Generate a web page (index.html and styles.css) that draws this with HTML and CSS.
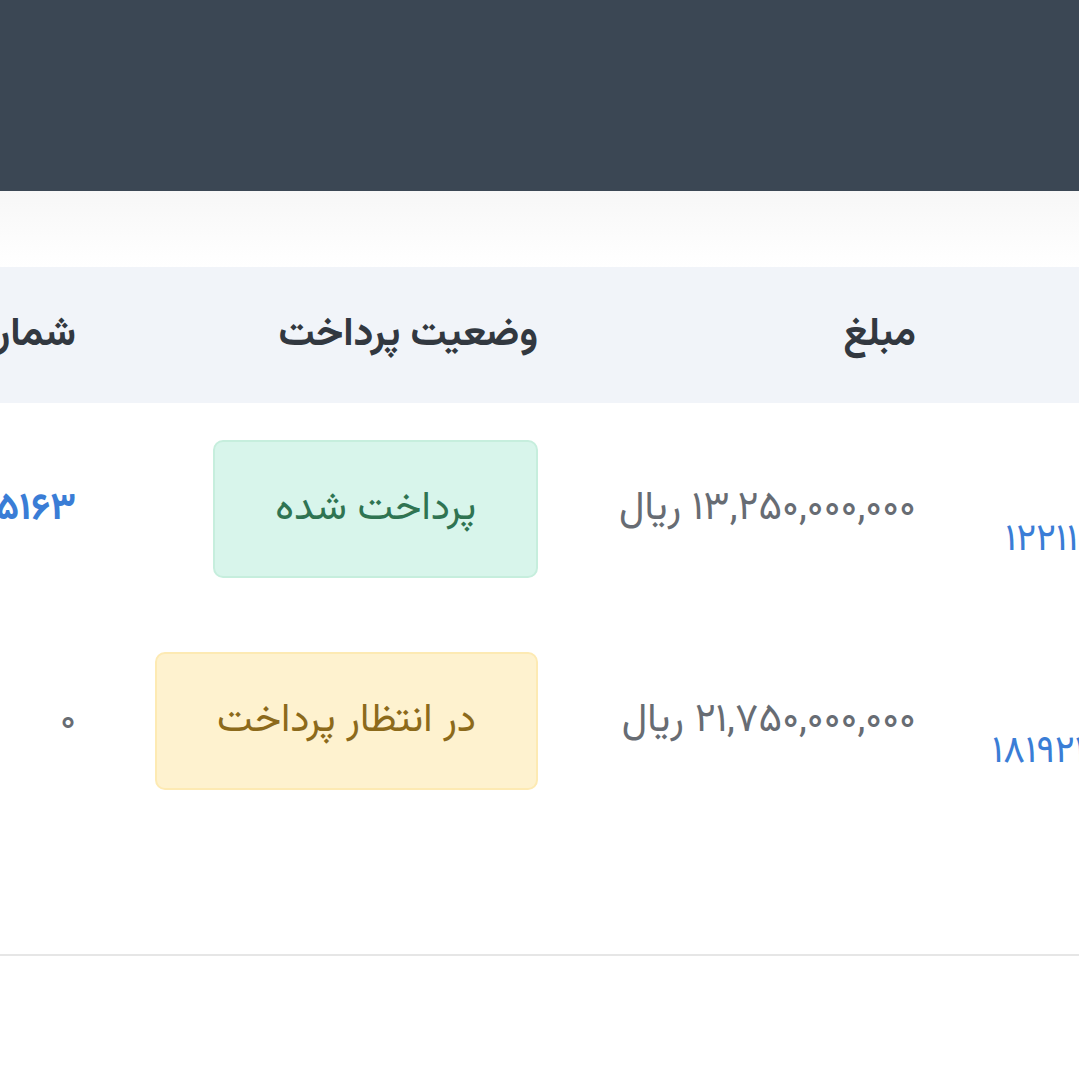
FILE: index.html
```html
<!DOCTYPE html>
<html lang="fa" dir="rtl">
<head>
<meta charset="utf-8">
<title>پرداخت‌ها</title>
<link rel="stylesheet" href="styles.css">
</head>
<body>
<header class="topbar"></header>
<div class="toolbar"></div>
<section class="card">
  <div class="scroller">
    <table class="payments">
      <colgroup>
        <col class="c-ref">
        <col class="c-amount">
        <col class="c-status">
        <col class="c-number">
      </colgroup>
      <thead>
        <tr>
          <th></th>
          <th>مبلغ</th>
          <th>وضعیت پرداخت</th>
          <th>شماره پیگیری</th>
        </tr>
      </thead>
      <tbody>
        <tr>
          <td class="ref"><span class="link">۱۲۲۱۱۴۵</span></td>
          <td class="amount">۱۳,۲۵۰,۰۰۰,۰۰۰ ریال</td>
          <td><span class="badge badge-paid">پرداخت شده</span></td>
          <td class="num"><span class="link bold">۴۰۲۰۵۱۶۳</span></td>
        </tr>
        <tr>
          <td class="ref"><span class="link">۱۸۱۹۲۳۷</span></td>
          <td class="amount">۲۱,۷۵۰,۰۰۰,۰۰۰ ریال</td>
          <td><span class="badge badge-pending">در انتظار پرداخت</span></td>
          <td class="num"><span class="zero">۰</span></td>
        </tr>
      </tbody>
    </table>
  </div>
</section>
</body>
</html>
```
FILE: styles.css
```css
html, body {
  margin: 0;
  padding: 0;
  background: #ffffff;
  font-family: "Vazirmatn", "Vazir", "Noto Sans Arabic", "DejaVu Sans", sans-serif;
}

.topbar {
  height: 191px;
  background: #3b4754;
}

.toolbar {
  height: 76px;
  background: linear-gradient(#f7f7f7, #ffffff);
}

.card {
  padding-bottom: 127px;
  border-bottom: 2px solid #e6e6e6;
}

.scroller {
  overflow: hidden;
  direction: rtl;
}

.payments {
  table-layout: fixed;
  width: 1346px;
  margin-right: -81px;
  border-collapse: collapse;
}

.c-ref { width: 206px; }
.c-amount { width: 378px; }
.c-status { width: 462px; }
.c-number { width: 300px; }

.payments thead tr {
  height: 136px;
}

.payments tbody tr {
  height: 212px;
}

.payments th {
  padding: 0 38px;
  background: #f1f4f9;
  color: #323840;
  font-size: 40px;
  font-weight: 700;
  text-align: right;
  white-space: nowrap;
  overflow: hidden;
}

.payments td {
  padding: 0 38px;
  text-align: right;
  vertical-align: middle;
  white-space: nowrap;
  overflow: hidden;
  font-size: 38px;
}

.payments td.ref {
  padding-top: 62px;
}

.link {
  color: #3a7dd6;
}

.link.bold {
  font-weight: 700;
}

.payments td.amount {
  color: #676c73;
  font-size: 40px;
  letter-spacing: 0.3px;
}

.zero {
  color: #676c73;
}

.badge {
  display: inline-block;
  box-sizing: border-box;
  height: 138px;
  line-height: 134px;
  padding: 0 60px;
  border: 2px solid;
  border-radius: 10px;
  font-size: 40px;
}

.badge-paid {
  background: #d8f5eb;
  border-color: #c6eedd;
  color: #2f7452;
}

.badge-pending {
  background: #fef2cf;
  border-color: #fdeab3;
  color: #8c6a1b;
}
```
